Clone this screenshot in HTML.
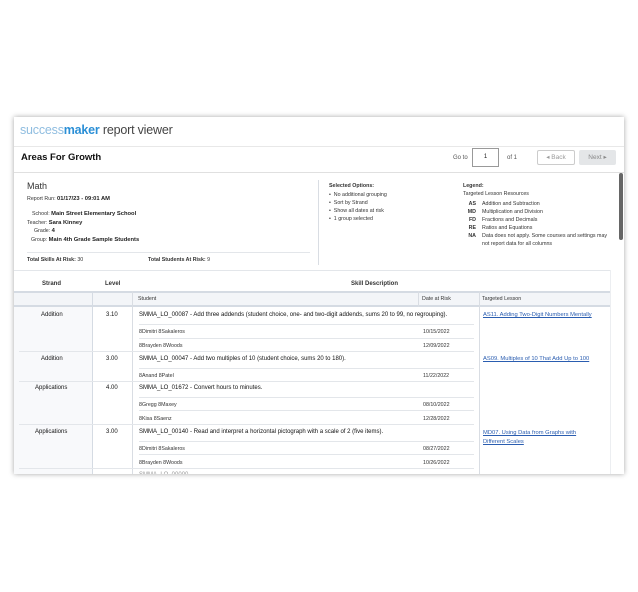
<!DOCTYPE html>
<html><head><style>
*{margin:0;padding:0;box-sizing:border-box}
body{width:638px;height:592px;background:#fff;font-family:"Liberation Sans",sans-serif;position:relative;overflow:hidden;color:#222}
.a{position:absolute;white-space:nowrap}
.card{position:absolute;left:14px;top:117px;width:610px;height:357px;background:#fff;box-shadow:0 0 5px rgba(0,0,0,.35);overflow:hidden}
.s{font-size:5.3px;color:#333}
.b{font-weight:bold}
.hl{position:absolute;height:1px;background:#e3e6ea}
.vl{position:absolute;width:1px;background:#d9dde3}
.lnk{color:#2a5db0;text-decoration:underline;font-size:5.8px}
.t{font-size:6px;color:#111}
</style></head><body>
<div class="card">
<div class="a" style="left:6px;top:6px;font-size:12.5px;letter-spacing:-0.2px"><span style="color:#8fbde0">success</span><span style="color:#2b8fd6;font-weight:bold">maker</span><span style="color:#444"> report viewer</span></div>
<div class="hl" style="left:0;top:29px;width:610px;background:#e8e8e8"></div>
<div class="a b" style="left:7px;top:35px;font-size:9.5px;color:#111">Areas For Growth</div>
<div class="a" style="left:439px;top:38px;font-size:6px;color:#555">Go to</div>
<div class="a" style="left:458px;top:31px;width:27px;height:19px;border:1px solid #999;background:#fff;font-size:6px;text-align:center;line-height:17px">1</div>
<div class="a" style="left:493px;top:38px;font-size:6px;color:#555">of 1</div>
<div class="a" style="left:523px;top:33px;width:38px;height:15px;border:1px solid #ccc;border-radius:2px;font-size:6.5px;color:#999;text-align:center;line-height:13px">◂ Back</div>
<div class="a" style="left:565px;top:33px;width:37px;height:15px;background:#e4e6e8;border-radius:2px;font-size:6.5px;color:#888;text-align:center;line-height:15px">Next ▸</div>
<div class="hl" style="left:0;top:55px;width:610px;background:#e0e0e0"></div>
<div class="a" style="left:605px;top:56px;width:4px;height:67px;background:#666;border-radius:2px"></div>

<div class="a" style="left:13px;top:64px;font-size:9px;color:#333">Math</div>
<div class="a s" style="left:13px;top:79px">Report Run: <span class="b" style="font-size:5.8px;color:#222">01/17/23 - 09:01 AM</span></div>
<div class="a s" style="left:18px;top:94px">School: <span class="b" style="font-size:5.8px;color:#222">Main Street Elementary School</span></div>
<div class="a s" style="left:13px;top:103px">Teacher: <span class="b" style="font-size:5.8px;color:#222">Sara Kinney</span></div>
<div class="a s" style="left:20px;top:111px">Grade: <span class="b" style="font-size:5.8px;color:#222">4</span></div>
<div class="a s" style="left:17px;top:120px">Group: <span class="b" style="font-size:5.8px;color:#222">Main 4th Grade Sample Students</span></div>
<div class="hl" style="left:13px;top:135px;width:283px"></div>
<div class="a s" style="left:13px;top:140px"><b>Total Skills At Risk:</b> 30</div>
<div class="a s" style="left:134px;top:140px"><b>Total Students At Risk:</b> 9</div>
<div class="vl" style="left:304px;top:63px;height:85px"></div>

<div class="a s b" style="left:315px;top:66px">Selected Options:</div>
<div class="a s" style="left:315px;top:74px;line-height:8px">•&nbsp; No additional grouping<br>•&nbsp; Sort by Strand<br>•&nbsp; Show all dates at risk<br>•&nbsp; 1 group selected</div>
<div class="a s b" style="left:449px;top:66px">Legend:</div>
<div class="a s" style="left:449px;top:74px">Targeted Lesson Resources</div>
<div class="a s" style="left:449px;top:83px;line-height:8px;width:150px;white-space:normal">
<b style="display:inline-block;width:13px;text-align:right;margin-right:6px">AS</b>Addition and Subtraction<br>
<b style="display:inline-block;width:13px;text-align:right;margin-right:6px">MD</b>Multiplication and Division<br>
<b style="display:inline-block;width:13px;text-align:right;margin-right:6px">FD</b>Fractions and Decimals<br>
<b style="display:inline-block;width:13px;text-align:right;margin-right:6px">RE</b>Ratios and Equations<br>
<b style="display:inline-block;width:13px;text-align:right;margin-right:6px">NA</b>Data does not apply. Some courses and settings may<br><span style="margin-left:19px">not report data for all columns</span></div>
<div class="hl" style="left:0;top:153px;width:596px"></div>

<div class="a" style="left:0;top:175px;width:78px;height:190px;background:#f8f9fb"></div>
<div class="a s b" style="left:28px;top:164px;font-size:6px">Strand</div>
<div class="a s b" style="left:91px;top:164px;font-size:6px">Level</div>
<div class="a s b" style="left:337px;top:164px;font-size:6px">Skill Description</div>
<div class="a" style="left:0;top:174px;width:596px;height:16px;background:#f3f5f8;border-top:2px solid #d5dbe3;border-bottom:2px solid #d5dbe3"></div>
<div class="a s" style="left:124px;top:179px">Student</div>
<div class="a s" style="left:408px;top:179px">Date at Risk</div>
<div class="a s" style="left:468px;top:179px">Targeted Lesson</div>
<div class="vl" style="left:78px;top:174px;height:190px;background:#d5dbe3"></div>
<div class="vl" style="left:118px;top:174px;height:190px"></div>
<div class="vl" style="left:404px;top:174px;height:16px"></div>
<div class="vl" style="left:465px;top:174px;height:190px"></div>
<div class="vl" style="left:596px;top:153px;height:212px;background:#eceef1"></div>

<div class="a t" style="left:27px;top:195px">Addition</div>
<div class="a t" style="left:92px;top:195px">3.10</div>
<div class="a t" style="left:125px;top:195px">SMMA_LO_00087 - Add three addends (student choice, one- and two-digit addends, sums 20 to 99, no regrouping).</div>
<div class="a lnk" style="left:469px;top:195px">AS11. Adding Two-Digit Numbers Mentally</div>
<div class="hl" style="left:125px;top:207px;width:335px"></div>
<div class="a s" style="left:125px;top:212px">8Dimitri 8Sakaleros</div><div class="a s" style="left:409px;top:212px">10/15/2022</div>
<div class="hl" style="left:125px;top:221px;width:335px"></div>
<div class="a s" style="left:125px;top:226px">8Brayden 8Woods</div><div class="a s" style="left:409px;top:226px">12/09/2022</div>
<div class="hl" style="left:5px;top:234px;width:455px"></div>

<div class="a t" style="left:27px;top:239px">Addition</div>
<div class="a t" style="left:92px;top:239px">3.00</div>
<div class="a t" style="left:125px;top:239px">SMMA_LO_00047 - Add two multiples of 10 (student choice, sums 20 to 180).</div>
<div class="a lnk" style="left:469px;top:239px">AS09. Multiples of 10 That Add Up to 100</div>
<div class="hl" style="left:125px;top:251px;width:335px"></div>
<div class="a s" style="left:125px;top:256px">8Anand 8Patel</div><div class="a s" style="left:409px;top:256px">11/22/2022</div>
<div class="hl" style="left:5px;top:264px;width:455px"></div>

<div class="a t" style="left:21px;top:268px">Applications</div>
<div class="a t" style="left:92px;top:268px">4.00</div>
<div class="a t" style="left:125px;top:268px">SMMA_LO_01672 - Convert hours to minutes.</div>
<div class="hl" style="left:125px;top:280px;width:335px"></div>
<div class="a s" style="left:125px;top:285px">8Gregg 8Maxey</div><div class="a s" style="left:409px;top:285px">08/10/2022</div>
<div class="hl" style="left:125px;top:293px;width:335px"></div>
<div class="a s" style="left:125px;top:299px">8Kisa 8Saenz</div><div class="a s" style="left:409px;top:299px">12/28/2022</div>
<div class="hl" style="left:5px;top:307px;width:455px"></div>

<div class="a t" style="left:21px;top:312px">Applications</div>
<div class="a t" style="left:92px;top:312px">3.00</div>
<div class="a t" style="left:125px;top:312px">SMMA_LO_00140 - Read and interpret a horizontal pictograph with a scale of 2 (five items).</div>
<div class="a lnk" style="left:469px;top:312px;line-height:9px">MD07. Using Data from Graphs with<br>Different Scales</div>
<div class="hl" style="left:125px;top:324px;width:335px"></div>
<div class="a s" style="left:125px;top:329px">8Dimitri 8Sakaleros</div><div class="a s" style="left:409px;top:329px">08/27/2022</div>
<div class="hl" style="left:125px;top:337px;width:335px"></div>
<div class="a s" style="left:125px;top:343px">8Brayden 8Woods</div><div class="a s" style="left:409px;top:343px">10/26/2022</div>
<div class="hl" style="left:5px;top:351px;width:455px"></div>
<div class="a t" style="left:125px;top:355px;color:#999">SMMA_LO_00000 - ...</div>
</div>
</body></html>
